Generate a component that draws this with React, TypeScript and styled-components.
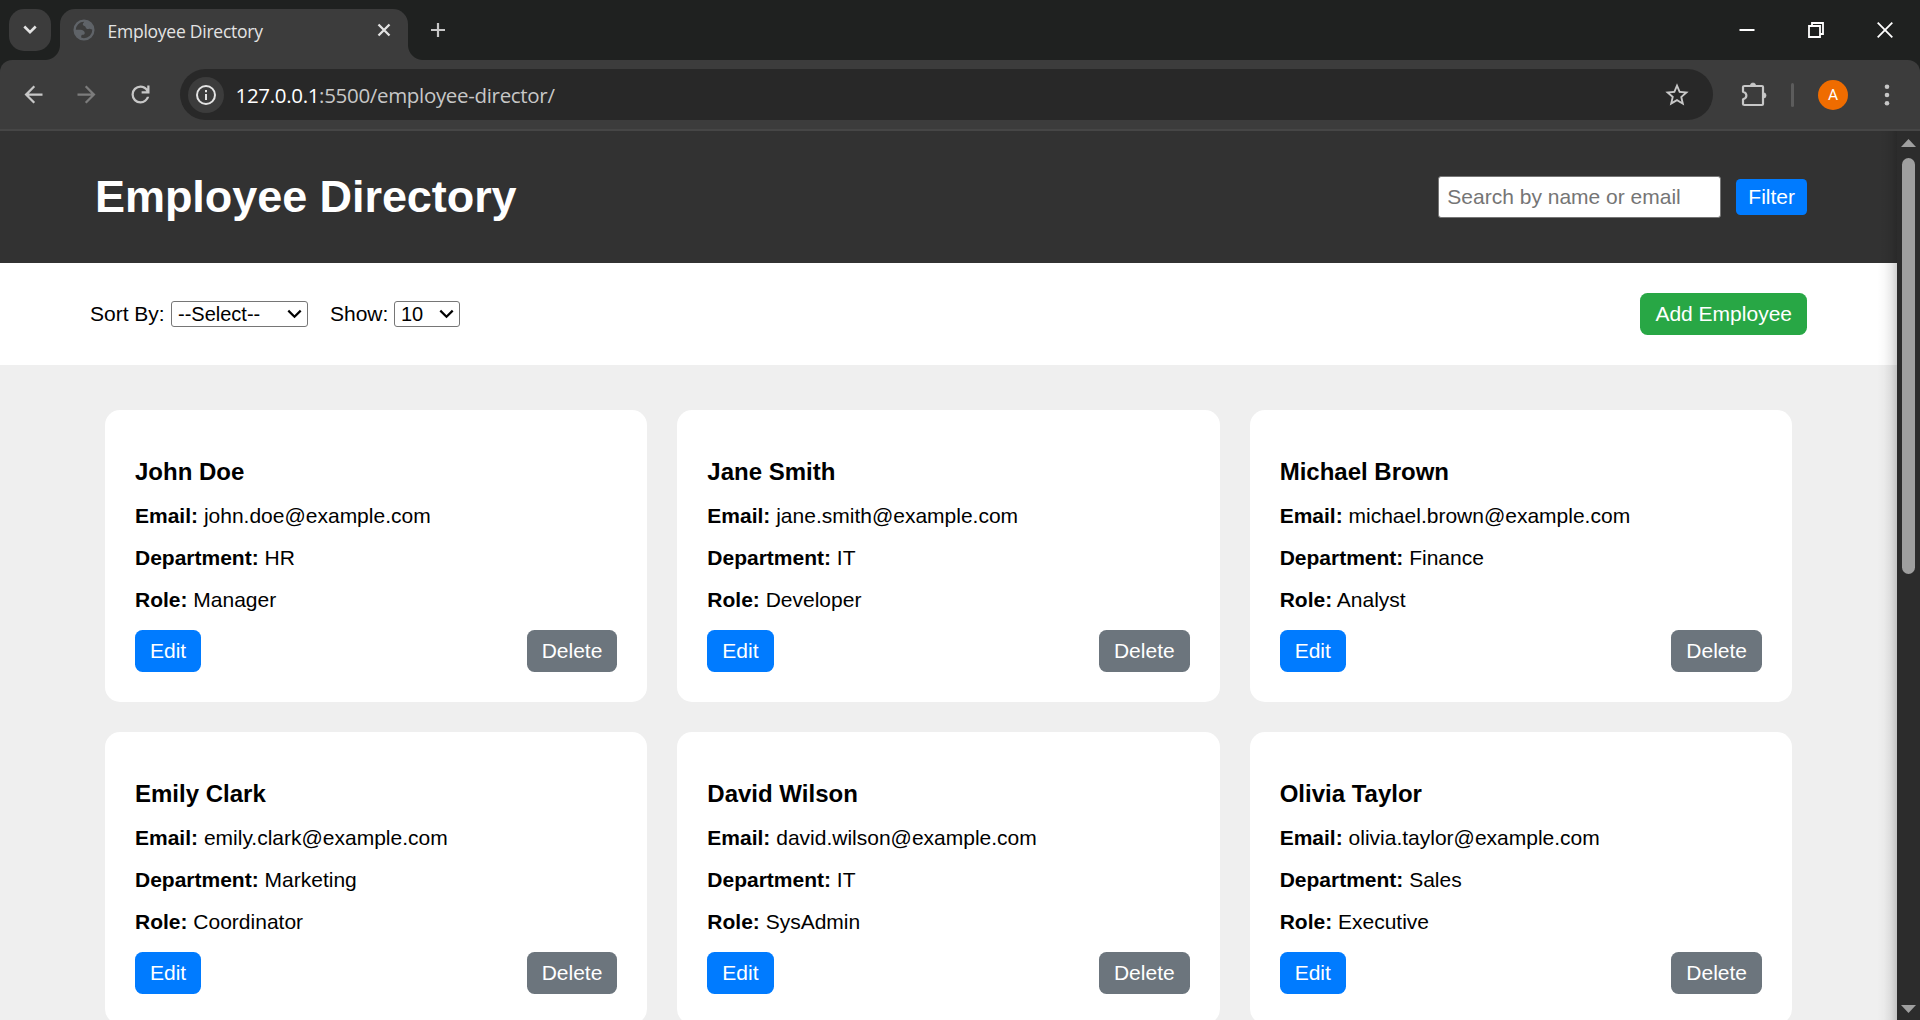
import React from "react";
import styled, { createGlobalStyle } from "styled-components";

const Global = createGlobalStyle`
  *, *::before, *::after { box-sizing: border-box; }
  html, body { margin: 0; padding: 0; overflow: hidden; }
  body { font-family: "Liberation Sans", Arial, sans-serif; font-size: 21px; color: #000; background: #1f2120; }
  button, input, select { font-family: inherit; font-size: inherit; }
`;

const Window = styled.div`
  display: flex;
  flex-direction: column;
  width: 1920px;
  height: 1020px;
  overflow: hidden;
  background: #1f2120;
`;

const TabStrip = styled.div`
  display: flex;
  flex: none;
  height: 60px;
  padding: 9px 0 0 9px;
`;

const TabSearch = styled.button`
  display: flex;
  align-items: center;
  justify-content: center;
  width: 42px;
  height: 42px;
  padding: 0;
  border: 0;
  border-radius: 15px;
  background: #3c3c3c;
`;

const Tab = styled.div`
  position: relative;
  display: flex;
  align-items: center;
  width: 348px;
  height: 51px;
  margin-left: 9px;
  padding: 0 14px 9px 12px;
  border-radius: 15px 15px 0 0;
  background: #3c3c3c;
  &::before, &::after {
    content: "";
    position: absolute;
    bottom: 0;
    width: 15px;
    height: 15px;
  }
  &::before { left: -15px; background: radial-gradient(circle at 0 0, transparent 14.5px, #3c3c3c 15.5px); }
  &::after { right: -15px; background: radial-gradient(circle at 100% 0, transparent 14.5px, #3c3c3c 15.5px); }
`;

const TabTitle = styled.span`
  flex: 1;
  margin-left: 11.5px;
  padding-top: 2px;
  font: 17.5px/24px "Open Sans", sans-serif;
  letter-spacing: -0.25px;
  color: #e3e3e3;
  white-space: nowrap;
`;

const NewTab = styled.div`
  display: flex;
  align-items: center;
  height: 42px;
  margin-left: 21px;
`;

const WindowControls = styled.div`
  display: flex;
  gap: 53px;
  align-items: center;
  height: 42px;
  margin-left: auto;
  padding-right: 27px;
`;

const Toolbar = styled.div`
  display: flex;
  flex: none;
  align-items: center;
  height: 71px;
  padding: 0 21px 0 19.5px;
  border-bottom: 2px solid #464646;
  border-radius: 12px 12px 0 0;
  background: #3c3c3c;
`;

const NavIcons = styled.div`
  display: flex;
  align-items: center;
  gap: 26.7px;
  width: 160.5px;
`;

const Omnibox = styled.div`
  display: flex;
  align-items: center;
  width: 1533px;
  height: 51px;
  padding: 0 22px 0 8px;
  border-radius: 26px;
  background: #282828;
`;

const SiteInfo = styled.span`
  display: flex;
  align-items: center;
  justify-content: center;
  width: 36px;
  height: 36px;
  border-radius: 50%;
  background: #3c3c3c;
`;

const Url = styled.span`
  flex: 1;
  margin-left: 11.5px;
  font: 20.5px/28px "Open Sans", sans-serif;
  letter-spacing: -0.32px;
  color: #c7c7c7;
  b { font-weight: 400; color: #fff; }
`;

const ToolbarActions = styled.div`
  display: flex;
  flex: 1;
  align-items: center;
  padding-left: 26px;
`;

const Divider = styled.span`
  width: 3px;
  height: 24px;
  margin: 0 24px 0 24px;
  border-radius: 2px;
  background: #5c5c5c;
`;

const Avatar = styled.span`
  width: 30px;
  height: 30px;
  border-radius: 50%;
  background: #ef6c00;
  color: #fff;
  font: 15.5px/31px Roboto, sans-serif;
  text-align: center;
`;

const MenuDots = styled.svg`
  margin-left: auto;
  margin-right: 9px;
`;

const Viewport = styled.div`
  display: flex;
  flex: 1;
  min-height: 0;
`;

const Page = styled.main`
  position: relative;
  width: 1897px;
  overflow: hidden;
  background: #efefef;
  &::after {
    content: "";
    position: absolute;
    top: 0;
    right: 0;
    bottom: 0;
    width: 20px;
    background: linear-gradient(to right, rgba(0,0,0,0), rgba(0,0,0,0.02) 35%, rgba(0,0,0,0.08) 70%, rgba(0,0,0,0.18));
  }
`;

const Header = styled.header`
  display: flex;
  align-items: center;
  justify-content: space-between;
  height: 132px;
  padding: 0 90px 0 95px;
  background: #323232;
`;

const Title = styled.h1`
  margin: 0 0 2px;
  font-size: 45px;
  line-height: 51px;
  letter-spacing: -0.06px;
  color: #fff;
`;

const SearchGroup = styled.div`
  display: flex;
  align-items: center;
  gap: 15px;
`;

const SearchInput = styled.input`
  width: 283px;
  height: 42px;
  padding: 0 8px;
  border: 1px solid #767676;
  border-radius: 3px;
  background: #fff;
  &::placeholder { color: #757575; opacity: 1; }
`;

const Button = styled.button<{ $tone: "blue" | "green" | "gray"; $compact?: boolean }>`
  height: ${(p) => (p.$compact ? 36 : 42)}px;
  padding: 0 ${(p) => (p.$compact ? 12 : 15)}px;
  border: 0;
  border-radius: ${(p) => (p.$compact ? 4.5 : 7.5)}px;
  line-height: 24px;
  color: #fff;
  background: ${(p) => ({ blue: "#007bff", green: "#28a745", gray: "#6c757d" })[p.$tone]};
`;

const Controls = styled.section`
  display: flex;
  align-items: center;
  justify-content: space-between;
  height: 102px;
  padding: 0 90px;
  background: #fff;
`;

const Sorting = styled.div`
  display: flex;
  align-items: center;
`;

const SelectLabel = styled.label<{ $width: number }>`
  width: ${(p) => p.$width}px;
`;

const Select = styled.div<{ $width: number; $gap?: number }>`
  display: flex;
  align-items: center;
  justify-content: space-between;
  width: ${(p) => p.$width}px;
  height: 26px;
  margin-right: ${(p) => p.$gap ?? 0}px;
  padding: 0 5px 0 6px;
  border: 1px solid #767676;
  border-radius: 3px;
  background: #fff;
  font-size: 20px;
  line-height: 24px;
`;

const Grid = styled.section`
  display: grid;
  grid-template-columns: repeat(3, 1fr);
  grid-auto-rows: 292px;
  gap: 30px;
  padding: 45px 105px 0;
`;

const Card = styled.article`
  padding: 30px;
  border-radius: 15px;
  background: #fff;
`;

const Name = styled.h3`
  margin: 18px 0 19px;
  font-size: 24px;
  line-height: 27px;
`;

const Field = styled.p`
  margin: 0 0 18px;
  line-height: 24px;
`;

const CardActions = styled.div`
  display: flex;
  justify-content: space-between;
`;

const Scrollbar = styled.div`
  display: flex;
  flex-direction: column;
  align-items: center;
  justify-content: space-between;
  width: 23px;
  padding: 8px 0 7px;
  background: #2c2c2c;
`;

const Thumb = styled.div`
  width: 13px;
  height: 416px;
  margin-bottom: auto;
  margin-top: 11px;
  border-radius: 7px;
  background: #9f9f9f;
`;

const Chevron = () => (
  <svg width="15" height="10" viewBox="0 0 15 10" fill="none" stroke="#000" strokeWidth="2.2">
    <path d="M1.3 1.6 7.5 7.8 13.7 1.6" />
  </svg>
);

const employees = [
  { name: "John Doe", email: "john.doe@example.com", department: "HR", role: "Manager" },
  { name: "Jane Smith", email: "jane.smith@example.com", department: "IT", role: "Developer" },
  { name: "Michael Brown", email: "michael.brown@example.com", department: "Finance", role: "Analyst" },
  { name: "Emily Clark", email: "emily.clark@example.com", department: "Marketing", role: "Coordinator" },
  { name: "David Wilson", email: "david.wilson@example.com", department: "IT", role: "SysAdmin" },
  { name: "Olivia Taylor", email: "olivia.taylor@example.com", department: "Sales", role: "Executive" },
];

export default function App() {
  return (
    <Window>
      <Global />
      <TabStrip>
        <TabSearch aria-label="Search tabs">
          <svg width="14" height="10" viewBox="0 0 14 10" fill="none" stroke="#e3e3e3" strokeWidth="2.6">
            <path d="M1.3 1.5 7 7.2 12.7 1.5" />
          </svg>
        </TabSearch>
        <Tab>
          <svg width="24" height="24" viewBox="0 0 24 24" fill="none" stroke="#5f6368">
            <circle cx="12" cy="12" r="9.400" strokeWidth="2.300" />
            <path
              d="M12.300 2.700C12.500 4.500 10.800 4.700 10.800 6.300c0 1.800 2.300 1.200 2.700 2.700.4 1.600 1.700 2.300 3.200 1.900 1.200-.3 1.800.8 4.700.4C20.800 6.500 17 2.900 12.300 2.700ZM2.700 11.800H8.500c2.200 0 4.300 1.300 4.300 3.200 0 1.400-1 1.800-2.300 1.800-1.400 0-1.300 1.500-1.300 4C5.300 19.500 2.600 16 2.700 11.800Z"
              fill="#5f6368"
              stroke="none"
            />
          </svg>
          <TabTitle>Employee Directory</TabTitle>
          <svg width="20" height="20" viewBox="0 0 20 20" stroke="#e3e3e3" strokeWidth="2.3">
            <path d="M4.5 4.5 15.5 15.5M15.5 4.5 4.5 15.5" />
          </svg>
        </Tab>
        <NewTab>
          <svg width="18" height="18" viewBox="0 0 18 18" stroke="#c7c7c7" strokeWidth="2.2">
            <path d="M9 2V16M2 9H16" />
          </svg>
        </NewTab>
        <WindowControls>
          <svg width="16" height="16" viewBox="0 0 16 16" fill="#fff"><path d="M.5 7h15v2H.5z" /></svg>
          <svg width="16" height="16" viewBox="0 0 16 16" fill="none" stroke="#fff" strokeWidth="1.8">
            <path d="M1 4H12V15H1zM4 4V1H15V12H12" />
          </svg>
          <svg width="16" height="16" viewBox="0 0 16 16" stroke="#fff" strokeWidth="1.8"><path d="M.7.7 15.3 15.3M15.3.7.7 15.3" /></svg>
        </WindowControls>
      </TabStrip>
      <Toolbar>
        <NavIcons>
          <svg width="27" height="27" viewBox="0 0 24 24" fill="#c7c7c7">
            <path d="M20 11H7.83l5.59-5.59L12 4l-8 8 8 8 1.41-1.41L7.83 13H20v-2z" />
          </svg>
          <svg width="27" height="27" viewBox="0 0 24 24" fill="#7c7c7c">
            <path d="M12 4l-1.41 1.41L16.17 11H4v2h12.17l-5.58 5.59L12 20l8-8z" />
          </svg>
          <svg width="27" height="27" viewBox="0 0 24 24" fill="#c7c7c7">
            <path d="M12 20q-3.35 0-5.675-2.325T4 12t2.325-5.675T12 4q1.725 0 3.3.713T18 6.75V4h2v7h-7V9h4.2q-.8-1.4-2.188-2.2T12 6Q9.500 6 7.750 7.750T6 12t1.750 4.250T12 18q1.925 0 3.475-1.100T17.650 14h2.100q-.7 2.650-2.850 4.325T12 20z" />
          </svg>
        </NavIcons>
        <Omnibox>
          <SiteInfo>
            <svg width="22" height="22" viewBox="0 0 22 22" fill="none" stroke="#e3e3e3" strokeWidth="2">
              <circle cx="11" cy="11" r="9" />
              <path d="M11 10V16M11 6V8.200" />
            </svg>
          </SiteInfo>
          <Url><b>127.0.0.1</b>:5500/employee-director/</Url>
          <svg width="28" height="28" viewBox="0 0 24 24" fill="#c7c7c7">
            <path d="M22 9.240l-7.190-.62L12 2 9.190 8.630 2 9.240l5.460 4.730L5.820 21 12 17.270 18.180 21l-1.630-7.030L22 9.240zM12 15.400l-3.760 2.270 1-4.280-3.320-2.880 4.380-.38L12 6.100l1.710 4.040 4.380.38-3.320 2.880 1 4.280L12 15.400z" />
          </svg>
        </Omnibox>
        <ToolbarActions>
          <svg width="28" height="28" viewBox="0 0 28 28" fill="none" stroke="#c7c7c7" strokeWidth="2.2" strokeLinejoin="round">
            <path d="M5.500 5H23Q24 5 24 6V23Q24 24 23 24H5.500Q4 24 4 23V18.300C8.500 17 8.500 12 4 10.700V6Q4 5 5.500 5Z" />
            <path d="M11.300 4.600a2.700 2.700 0 0 1 5.400 0zM24.400 11.700a2.700 2.700 0 0 1 0 5.400z" fill="#c7c7c7" stroke="#c7c7c7" strokeWidth="0.6" />
          </svg>
          <Divider />
          <Avatar>A</Avatar>
          <MenuDots width="6" height="24" viewBox="0 0 6 24" fill="#c7c7c7">
            <circle cx="3" cy="3.700" r="2.300" /><circle cx="3" cy="12" r="2.300" /><circle cx="3" cy="20.300" r="2.300" />
          </MenuDots>
        </ToolbarActions>
      </Toolbar>
      <Viewport>
        <Page>
          <Header>
            <Title>Employee Directory</Title>
            <SearchGroup>
              <SearchInput placeholder="Search by name or email" />
              <Button $tone="blue" $compact>Filter</Button>
            </SearchGroup>
          </Header>
          <Controls>
            <Sorting>
              <SelectLabel $width={81}>Sort By:</SelectLabel>
              <Select $width={137} $gap={22}>--Select--<Chevron /></Select>
              <SelectLabel $width={64}>Show:</SelectLabel>
              <Select $width={66}>10<Chevron /></Select>
            </Sorting>
            <Button $tone="green">Add Employee</Button>
          </Controls>
          <Grid>
            {employees.map((e) => (
              <Card key={e.email}>
                <Name>{e.name}</Name>
                <Field><strong>Email:</strong> {e.email}</Field>
                <Field><strong>Department:</strong> {e.department}</Field>
                <Field><strong>Role:</strong> {e.role}</Field>
                <CardActions>
                  <Button $tone="blue">Edit</Button>
                  <Button $tone="gray">Delete</Button>
                </CardActions>
              </Card>
            ))}
          </Grid>
        </Page>
        <Scrollbar>
          <svg width="15" height="8" viewBox="0 0 15 8" fill="#9f9f9f"><path d="M0 8 7.500 0 15 8z" /></svg>
          <Thumb />
          <svg width="15" height="8" viewBox="0 0 15 8" fill="#9f9f9f"><path d="M0 0 7.500 8 15 0z" /></svg>
        </Scrollbar>
      </Viewport>
    </Window>
  );
}
